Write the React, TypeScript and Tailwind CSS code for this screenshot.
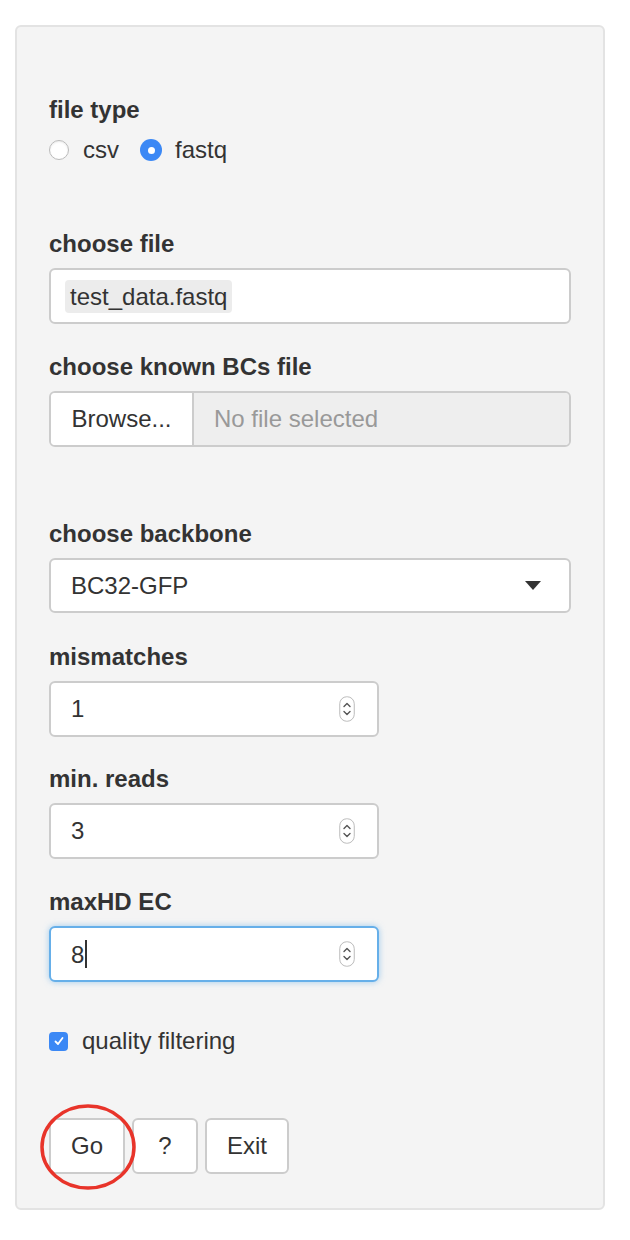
const font = { fontFamily: '"Liberation Sans", Arial, Helvetica, sans-serif' };

function Label({ children }: { children: React.ReactNode }) {
  return <div className="text-[24px] font-bold leading-[30px] text-[#333]">{children}</div>;
}

function Spinner() {
  return (
    <svg width="16" height="26" viewBox="0 0 16 26" className="shrink-0">
      <rect x="0.75" y="0.75" width="14.5" height="24.5" rx="7" fill="#fff" stroke="#bbb" strokeWidth="1" />
      <path d="M5 10.5 L8 7.5 L11 10.5" fill="none" stroke="#555" strokeWidth="1.4" strokeLinecap="round" strokeLinejoin="round" />
      <path d="M5 15.5 L8 18.5 L11 15.5" fill="none" stroke="#555" strokeWidth="1.4" strokeLinecap="round" strokeLinejoin="round" />
    </svg>
  );
}

function NumberField({ value, focused }: { value: string; focused?: boolean }) {
  return (
    <div
      className={
        focused
          ? 'mt-[9px] flex h-[56px] w-[330px] items-center rounded-[6px] border-2 border-[#66afe9] bg-white pl-[20px] pr-[22px] shadow-[0_0_6px_rgba(102,175,233,0.6)]'
          : 'mt-[9px] flex h-[56px] w-[330px] items-center rounded-[6px] border-2 border-[#ccc] bg-white pl-[20px] pr-[22px]'
      }
    >
      <span className="flex-1 text-[24px] text-[#333]">
        {value}
        {focused && <span className="ml-px inline-block h-[28px] w-[2px] translate-y-[5px] bg-[#333]" />}
      </span>
      <Spinner />
    </div>
  );
}

export default function App() {
  return (
    <div className="min-h-[1240px] bg-white pl-[15px] pt-[25px]" style={font}>
      <div className="w-[590px] rounded-[6px] border-2 border-[#e3e3e3] bg-[#f4f4f4] pb-[34px] pl-[32px] pr-[32px] pt-[68px]">
        {/* file type */}
        <Label>file type</Label>
        <div className="mt-[10px] flex h-[30px] items-center text-[24px] text-[#333]">
          <span className="inline-block h-[20px] w-[20px] rounded-full border border-[#bbb] bg-white shadow-[inset_0_1px_2px_rgba(0,0,0,0.08)]" />
          <span className="ml-[14px]">csv</span>
          <span className="ml-[21px] flex h-[22px] w-[22px] items-center justify-center rounded-full bg-[#3b88f5]">
            <span className="h-[7px] w-[7px] rounded-full bg-white" />
          </span>
          <span className="ml-[13px]">fastq</span>
        </div>

        {/* choose file */}
        <div className="mt-[64px]">
          <Label>choose file</Label>
          <div className="mt-[9px] flex h-[56px] items-center rounded-[6px] border-2 border-[#ccc] bg-white pl-[14px]">
            <span className="rounded-[4px] bg-[#ececec] px-[5px] py-[2px] text-[24px] leading-[29px] text-[#333]">test_data.fastq</span>
          </div>
        </div>

        {/* known BCs */}
        <div className="mt-[28px]">
          <Label>choose known BCs file</Label>
          <div className="mt-[9px] flex h-[56px] overflow-hidden rounded-[6px] border-2 border-[#ccc]">
            <div className="flex w-[143px] items-center justify-center border-r-2 border-[#ccc] bg-white text-[24px] text-[#333]">
              Browse...
            </div>
            <div className="flex flex-1 items-center bg-[#eee] pl-[20px] text-[24px] text-[#999]">No file selected</div>
          </div>
        </div>

        {/* backbone */}
        <div className="mt-[72px]">
          <Label>choose backbone</Label>
          <div className="mt-[9px] flex h-[55px] items-center justify-between rounded-[6px] border-2 border-[#ccc] bg-white pl-[20px] pr-[28px]">
            <span className="text-[24px] text-[#333]">BC32-GFP</span>
            <svg width="16" height="9" viewBox="0 0 16 9">
              <path d="M0 0 H16 L8 9 Z" fill="#333" />
            </svg>
          </div>
        </div>

        {/* numeric inputs */}
        <div className="mt-[29px]">
          <Label>mismatches</Label>
          <NumberField value="1" />
        </div>
        <div className="mt-[27px]">
          <Label>min. reads</Label>
          <NumberField value="3" />
        </div>
        <div className="mt-[28px]">
          <Label>maxHD EC</Label>
          <NumberField value="8" focused />
        </div>

        {/* quality filtering */}
        <div className="mt-[44px] flex h-[30px] items-center text-[24px] text-[#333]">
          <span className="flex h-[19px] w-[19px] items-center justify-center rounded-[4px] bg-[#3b88f5]">
            <svg width="12" height="12" viewBox="0 0 12 12">
              <path d="M2.5 6.5 L5 9 L9.5 3" fill="none" stroke="#fff" strokeWidth="1.8" strokeLinecap="round" strokeLinejoin="round" />
            </svg>
          </span>
          <span className="ml-[14px]">quality filtering</span>
        </div>

        {/* buttons */}
        <div className="relative mt-[62px] flex gap-[7px]">
          <button className="h-[56px] w-[76px] rounded-[6px] border-2 border-[#ccc] bg-white text-[24px] text-[#333]">Go</button>
          <button className="h-[56px] w-[66px] rounded-[6px] border-2 border-[#ccc] bg-white text-[24px] text-[#333]">?</button>
          <button className="h-[56px] w-[84px] rounded-[6px] border-2 border-[#ccc] bg-white text-[24px] text-[#333]">Exit</button>
          <svg className="pointer-events-none absolute left-[-10px] top-[-15px]" width="98" height="88" viewBox="0 0 98 88">
            <ellipse cx="49" cy="44" rx="46" ry="41" fill="none" stroke="#e8342a" strokeWidth="3.5" />
          </svg>
        </div>
      </div>
    </div>
  );
}
